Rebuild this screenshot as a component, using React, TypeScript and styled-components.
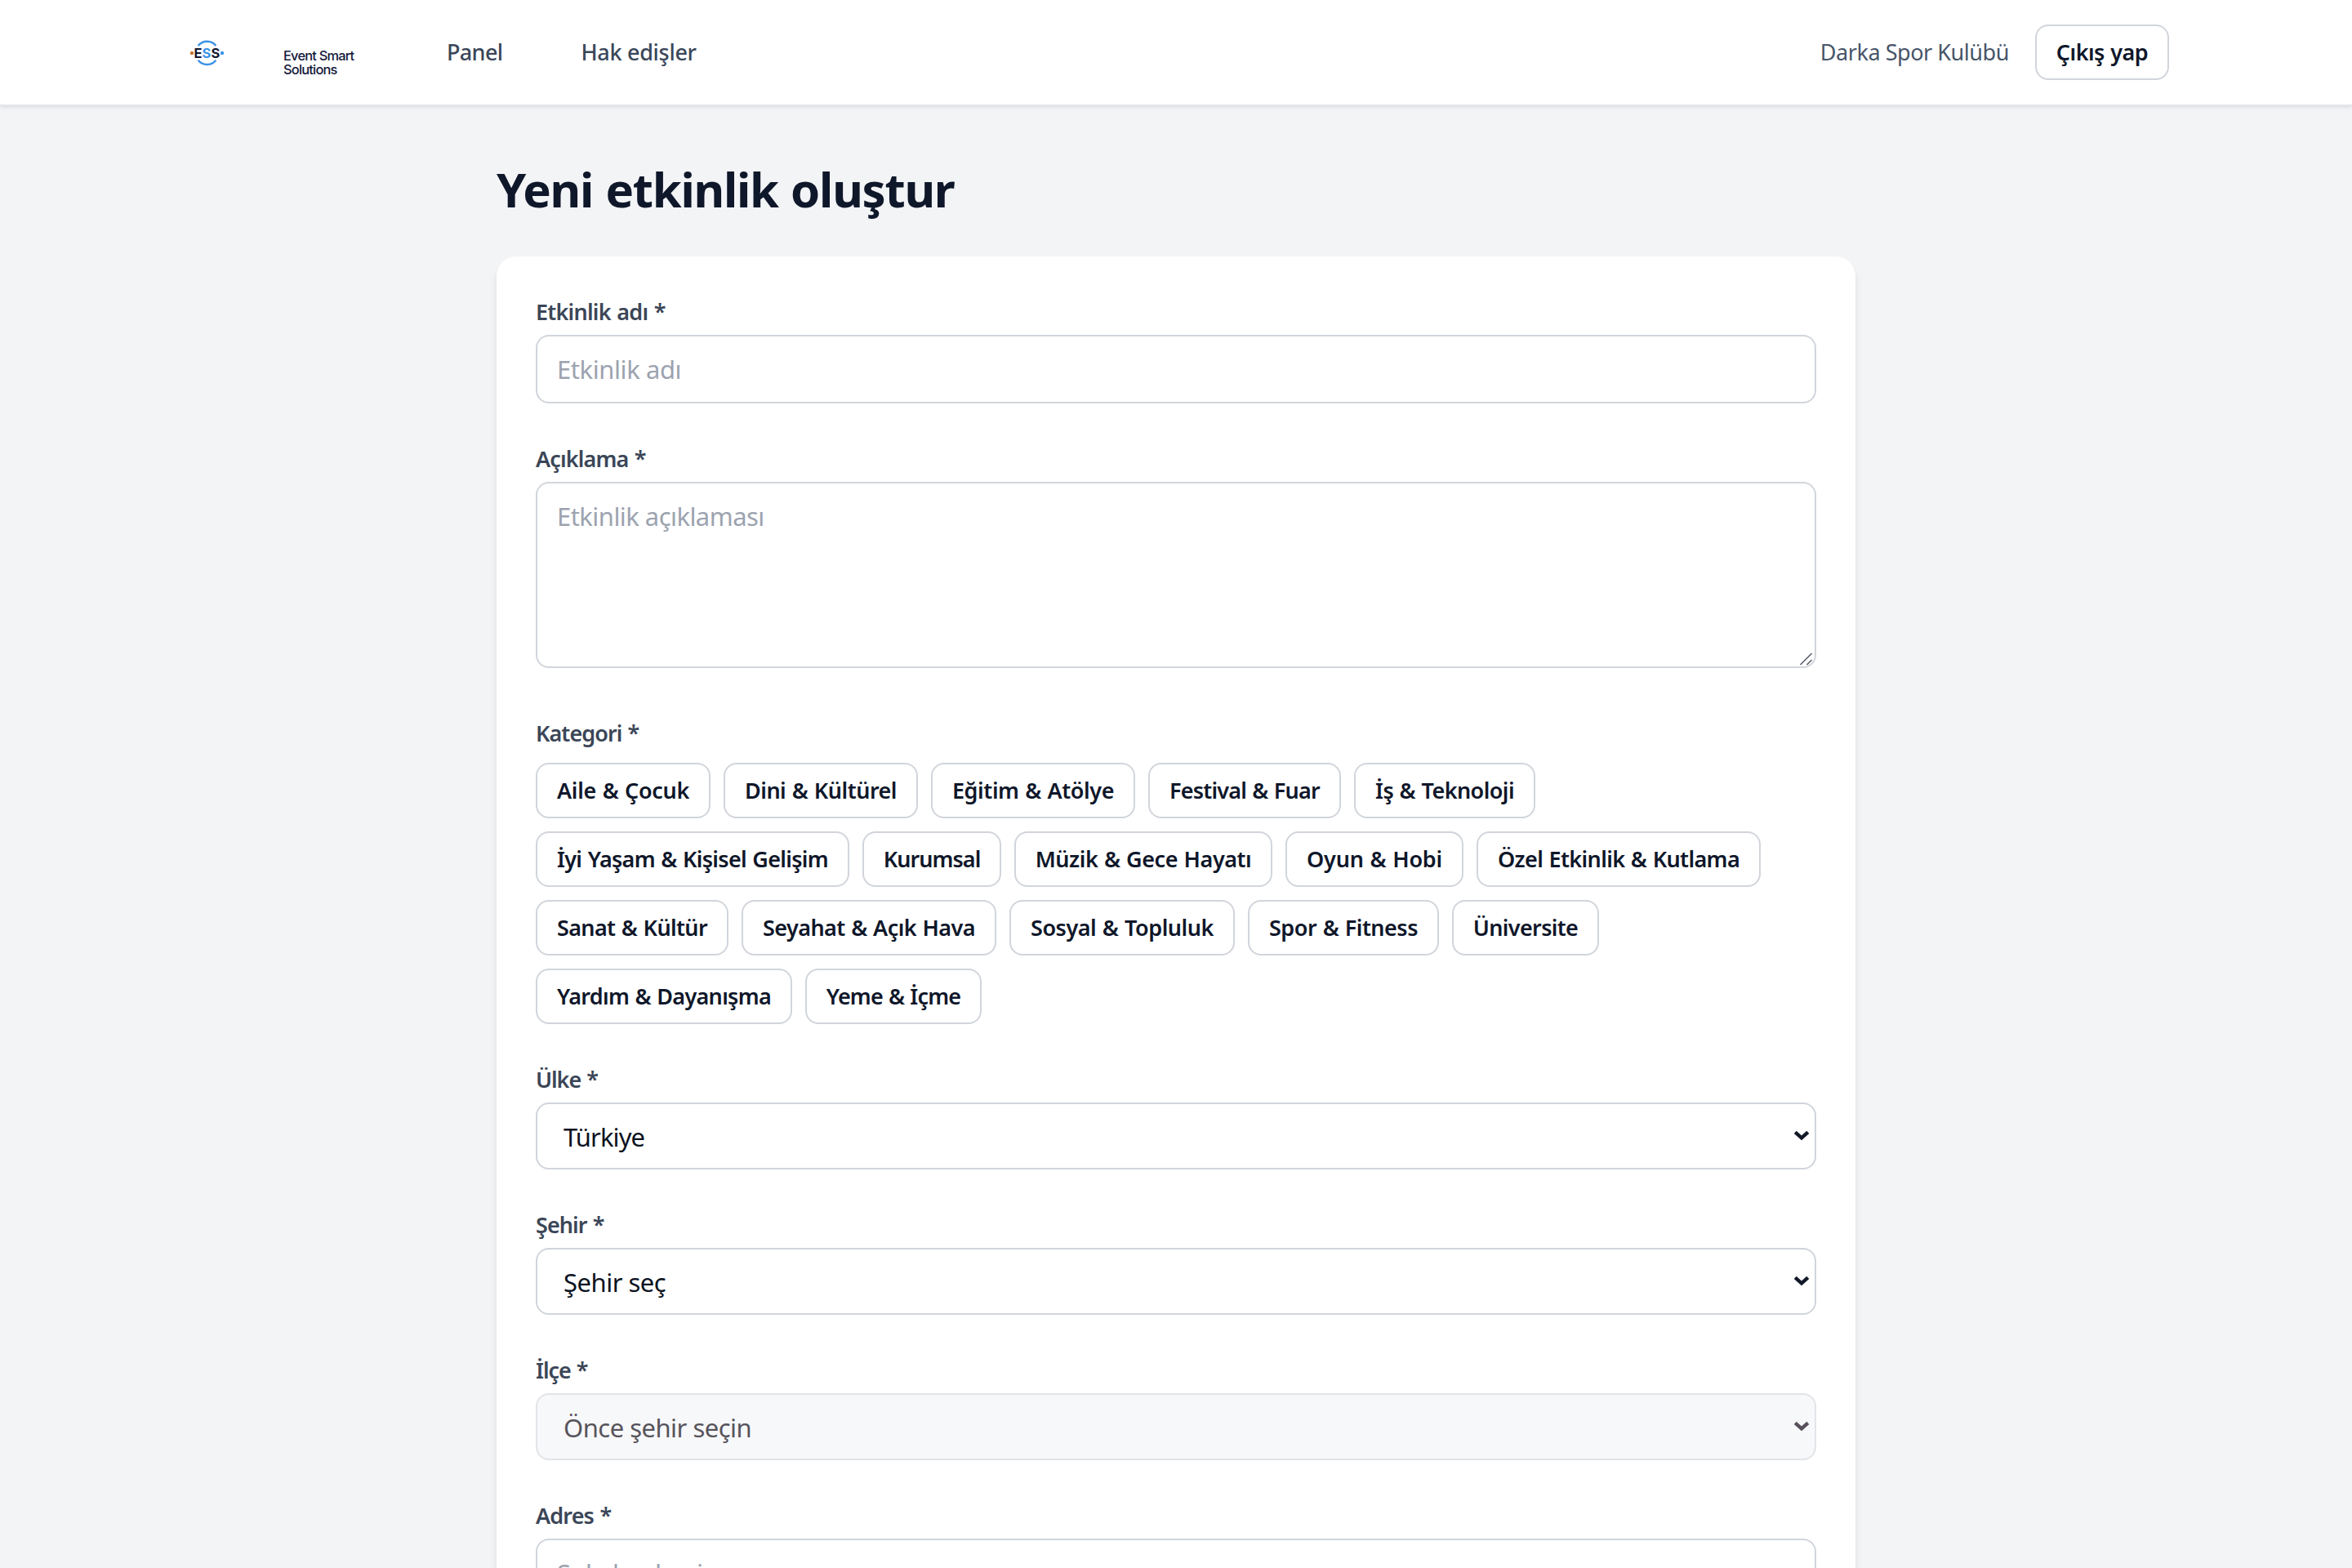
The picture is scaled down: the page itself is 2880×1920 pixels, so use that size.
import styled, { createGlobalStyle } from 'styled-components';

const FONT = '"Segoe UI", "Noto Sans", "Open Sans", sans-serif';

const GlobalStyle = createGlobalStyle`
  *, *::before, *::after { box-sizing: border-box; }
  body {
    margin: 0;
    background: #f3f4f6;
    color: #0f172a;
    font-family: ${FONT};
  }
  input, textarea, select, button { font-family: inherit; }
`;

const Page = styled.div`
  height: 100vh;
  overflow: hidden;
  display: flex;
  flex-direction: column;
`;

const Header = styled.header`
  flex: none;
  height: 130px;
  padding: 0 224px;
  display: flex;
  align-items: center;
  background: #fff;
  border-bottom: 2px solid #e2e5e9;
  box-shadow: 0 2px 6px rgba(0, 0, 0, 0.06), 0 2px 4px -2px rgba(0, 0, 0, 0.06);
`;

const Brand = styled.a`
  display: flex;
  align-items: center;
  width: 323px;
  gap: 63px;
`;

const LogoMark = styled.svg`
  flex: none;
  width: 60px;
  height: 40px;
`;

const BrandName = styled.span`
  margin-top: 26px;
  font-family: Inter, sans-serif;
  font-size: 16.4px;
  font-weight: 500;
  line-height: 17px;
  letter-spacing: -0.8px;
  color: #14193a;
  white-space: nowrap;
`;

const Nav = styled.nav`
  display: flex;
  gap: 96px;
`;

const NavLink = styled.a<{ $tracking: number }>`
  font-size: 27px;
  font-weight: 500;
  line-height: 40px;
  letter-spacing: ${(p) => p.$tracking}px;
  color: #3a4759;
  white-space: nowrap;
`;

const Account = styled.div`
  margin-left: auto;
  display: flex;
  align-items: center;
  gap: 32px;
`;

const UserName = styled.span`
  font-size: 27px;
  line-height: 40px;
  letter-spacing: -0.45px;
  color: #475569;
`;

const OutlineButton = styled.button<{ $width: number; $tracking: number }>`
  width: ${(p) => p.$width}px;
  height: 68px;
  padding: 0;
  border: 2px solid #d1d5db;
  border-radius: 16px;
  background: #fff;
  color: #0f172a;
  font-size: 27px;
  font-weight: 600;
  line-height: 40px;
  letter-spacing: ${(p) => p.$tracking}px;
  word-spacing: 1px;
  white-space: nowrap;
`;

const Main = styled.main`
  flex: 1;
  width: 1664px;
  margin: 0 auto;
  padding-top: 64px;
`;

const Title = styled.h1`
  margin: 0 0 45px;
  font-size: 58px;
  font-weight: 700;
  line-height: 75px;
  letter-spacing: -1.25px;
  word-spacing: 1.5px;
`;

const Card = styled.form`
  min-height: 1700px;
  padding: 48px;
  display: flex;
  flex-direction: column;
  gap: 48px;
  border-radius: 24px;
  background: #fff;
  box-shadow: 0 8px 12px -2px rgba(0, 0, 0, 0.1), 0 4px 8px -4px rgba(0, 0, 0, 0.1);
`;

const Field = styled.div<{ $gap?: number; $after?: number }>`
  display: flex;
  flex-direction: column;
  gap: ${(p) => p.$gap ?? 8}px;
  padding-bottom: ${(p) => p.$after ?? 0}px;
`;

const Label = styled.label<{ $tracking: number }>`
  font-size: 27px;
  font-weight: 600;
  line-height: 40px;
  letter-spacing: ${(p) => p.$tracking}px;
  word-spacing: 1.2px;
  color: #3b4657;
`;

const Control = styled.div`
  position: relative;
  display: flex;
`;

const TextInput = styled.input<{ $tracking: number }>`
  width: 100%;
  height: 84px;
  padding: 0 24px;
  border: 2px solid #d1d5db;
  border-radius: 16px;
  background: #fff;
  font-size: 31px;
  letter-spacing: ${(p) => p.$tracking}px;
  outline: none;
  &::placeholder { color: #9ca3af; opacity: 1; }
`;

const TextArea = styled.textarea`
  display: block;
  width: 100%;
  height: 228px;
  padding: 16px 24px;
  border: 2px solid #d1d5db;
  border-radius: 16px;
  background: #fff;
  font-size: 31px;
  line-height: 48px;
  letter-spacing: -0.55px;
  outline: none;
  resize: none;
  &::placeholder { color: #9ca3af; opacity: 1; }
`;

const ResizeGrip = styled.svg`
  position: absolute;
  right: 2px;
  bottom: 2px;
  width: 20px;
  height: 20px;
  stroke: #5d6270;
  stroke-width: 1.7;
`;

const Select = styled.select<{ $tracking: number }>`
  appearance: none;
  width: 100%;
  height: 82px;
  padding: 1px 60px 0 32px;
  border: 2px solid #d1d5db;
  border-radius: 16px;
  background: #fff;
  color: #0b1220;
  font-size: 31px;
  letter-spacing: ${(p) => p.$tracking}px;
  outline: none;
  &:disabled {
    border-color: #e2e4e8;
    background: #f7f8fa;
    color: #57545b;
    opacity: 1;
  }
`;

const Chevron = styled.svg<{ $muted?: boolean }>`
  position: absolute;
  right: 8px;
  top: 33px;
  width: 20px;
  height: 16px;
  fill: none;
  stroke: ${(p) => (p.$muted ? '#57505a' : '#111827')};
  stroke-width: 4.4;
  pointer-events: none;
`;

const Chips = styled.div`
  display: flex;
  flex-wrap: wrap;
  gap: 16px;
`;

interface Category {
  name: string;
  width: number;
  tracking: number;
}

const categories: Category[] = [
  { name: 'Aile & Çocuk', width: 214, tracking: -0.32 },
  { name: 'Dini & Kültürel', width: 238, tracking: -0.5 },
  { name: 'Eğitim & Atölye', width: 250, tracking: -0.41 },
  { name: 'Festival & Fuar', width: 236, tracking: -0.79 },
  { name: 'İş & Teknoloji', width: 222, tracking: -0.57 },
  { name: 'İyi Yaşam & Kişisel Gelişim', width: 384, tracking: -0.69 },
  { name: 'Kurumsal', width: 170, tracking: -0.95 },
  { name: 'Müzik & Gece Hayatı', width: 316, tracking: -0.45 },
  { name: 'Oyun & Hobi', width: 218, tracking: -0.2 },
  { name: 'Özel Etkinlik & Kutlama', width: 348, tracking: -0.63 },
  { name: 'Sanat & Kültür', width: 236, tracking: -0.64 },
  { name: 'Seyahat & Açık Hava', width: 312, tracking: -0.57 },
  { name: 'Sosyal & Topluluk', width: 276, tracking: -0.46 },
  { name: 'Spor & Fitness', width: 234, tracking: -0.5 },
  { name: 'Üniversite', width: 180, tracking: -0.66 },
  { name: 'Yardım & Dayanışma', width: 314, tracking: -0.69 },
  { name: 'Yeme & İçme', width: 216, tracking: -0.86 },
];

interface SelectFieldProps {
  id: string;
  label: string;
  labelTracking: number;
  value: string;
  tracking: number;
  disabled?: boolean;
}

function SelectField({ id, label, labelTracking, value, tracking, disabled }: SelectFieldProps) {
  return (
    <Field>
      <Label htmlFor={id} $tracking={labelTracking}>{label}</Label>
      <Control>
        <Select id={id} $tracking={tracking} disabled={disabled} defaultValue={value}>
          <option value={value}>{value}</option>
        </Select>
        <Chevron viewBox="0 0 20 16" $muted={disabled}>
          <path d="M2.2 3.4 L10 10.4 L17.8 3.4" />
        </Chevron>
      </Control>
    </Field>
  );
}

function Logo() {
  return (
    <LogoMark viewBox="0 0 60 40">
      <g fill="none" stroke="#3b93e6" strokeWidth="2.4">
        <path d="M18.6 12 A14 14 0 0 1 40.4 12" />
        <path d="M18.6 29.8 A14 14 0 0 0 40.4 29.8" />
      </g>
      <circle cx="11" cy="21" r="2.2" fill="#c8752f" />
      <circle cx="48" cy="21" r="2.2" fill="#3b93e6" />
      <text
        x="13.6"
        y="26.9"
        fontFamily="Inter, sans-serif"
        fontSize="16.4"
        fontWeight="700"
        textLength="31.6"
        lengthAdjust="spacingAndGlyphs"
        fill="#11172f"
      >
        E<tspan fill="#3b93e6">S</tspan>S
      </text>
    </LogoMark>
  );
}

export default function App() {
  return (
    <Page>
      <GlobalStyle />
      <Header>
        <Brand>
          <Logo />
          <BrandName>
            Event Smart
            <br />
            Solutions
          </BrandName>
        </Brand>
        <Nav>
          <NavLink $tracking={-0.65}>Panel</NavLink>
          <NavLink $tracking={-0.3}>Hak edişler</NavLink>
        </Nav>
        <Account>
          <UserName>Darka Spor Kulübü</UserName>
          <OutlineButton type="button" $width={164} $tracking={-0.55}>
            Çıkış yap
          </OutlineButton>
        </Account>
      </Header>
      <Main>
        <Title>Yeni etkinlik oluştur</Title>
        <Card>
          <Field>
            <Label htmlFor="name" $tracking={-0.77}>Etkinlik adı *</Label>
            <TextInput id="name" placeholder="Etkinlik adı" $tracking={-0.42} />
          </Field>
          <Field $after={12}>
            <Label htmlFor="description" $tracking={-0.87}>Açıklama *</Label>
            <Control>
              <TextArea id="description" placeholder="Etkinlik açıklaması" />
              <ResizeGrip viewBox="0 0 20 20">
                <path d="M2.5 18 L16.5 4 M10.5 18 L16.5 12" />
              </ResizeGrip>
            </Control>
          </Field>
          <Field $gap={16}>
            <Label as="span" $tracking={-0.95}>Kategori *</Label>
            <Chips>
              {categories.map((c) => (
                <OutlineButton key={c.name} type="button" $width={c.width} $tracking={c.tracking}>
                  {c.name}
                </OutlineButton>
              ))}
            </Chips>
          </Field>
          <SelectField id="country" label="Ülke *" labelTracking={-1.1} value="Türkiye" tracking={-0.9} />
          <SelectField id="city" label="Şehir *" labelTracking={-0.95} value="Şehir seç" tracking={-0.5} />
          <SelectField id="district" label="İlçe *" labelTracking={-1.1} value="Önce şehir seçin" tracking={-0.52} disabled />
          <Field>
            <Label htmlFor="address" $tracking={-0.85}>Adres *</Label>
            <TextInput id="address" placeholder="Sokak adresi" $tracking={-0.4} />
          </Field>
        </Card>
      </Main>
    </Page>
  );
}
